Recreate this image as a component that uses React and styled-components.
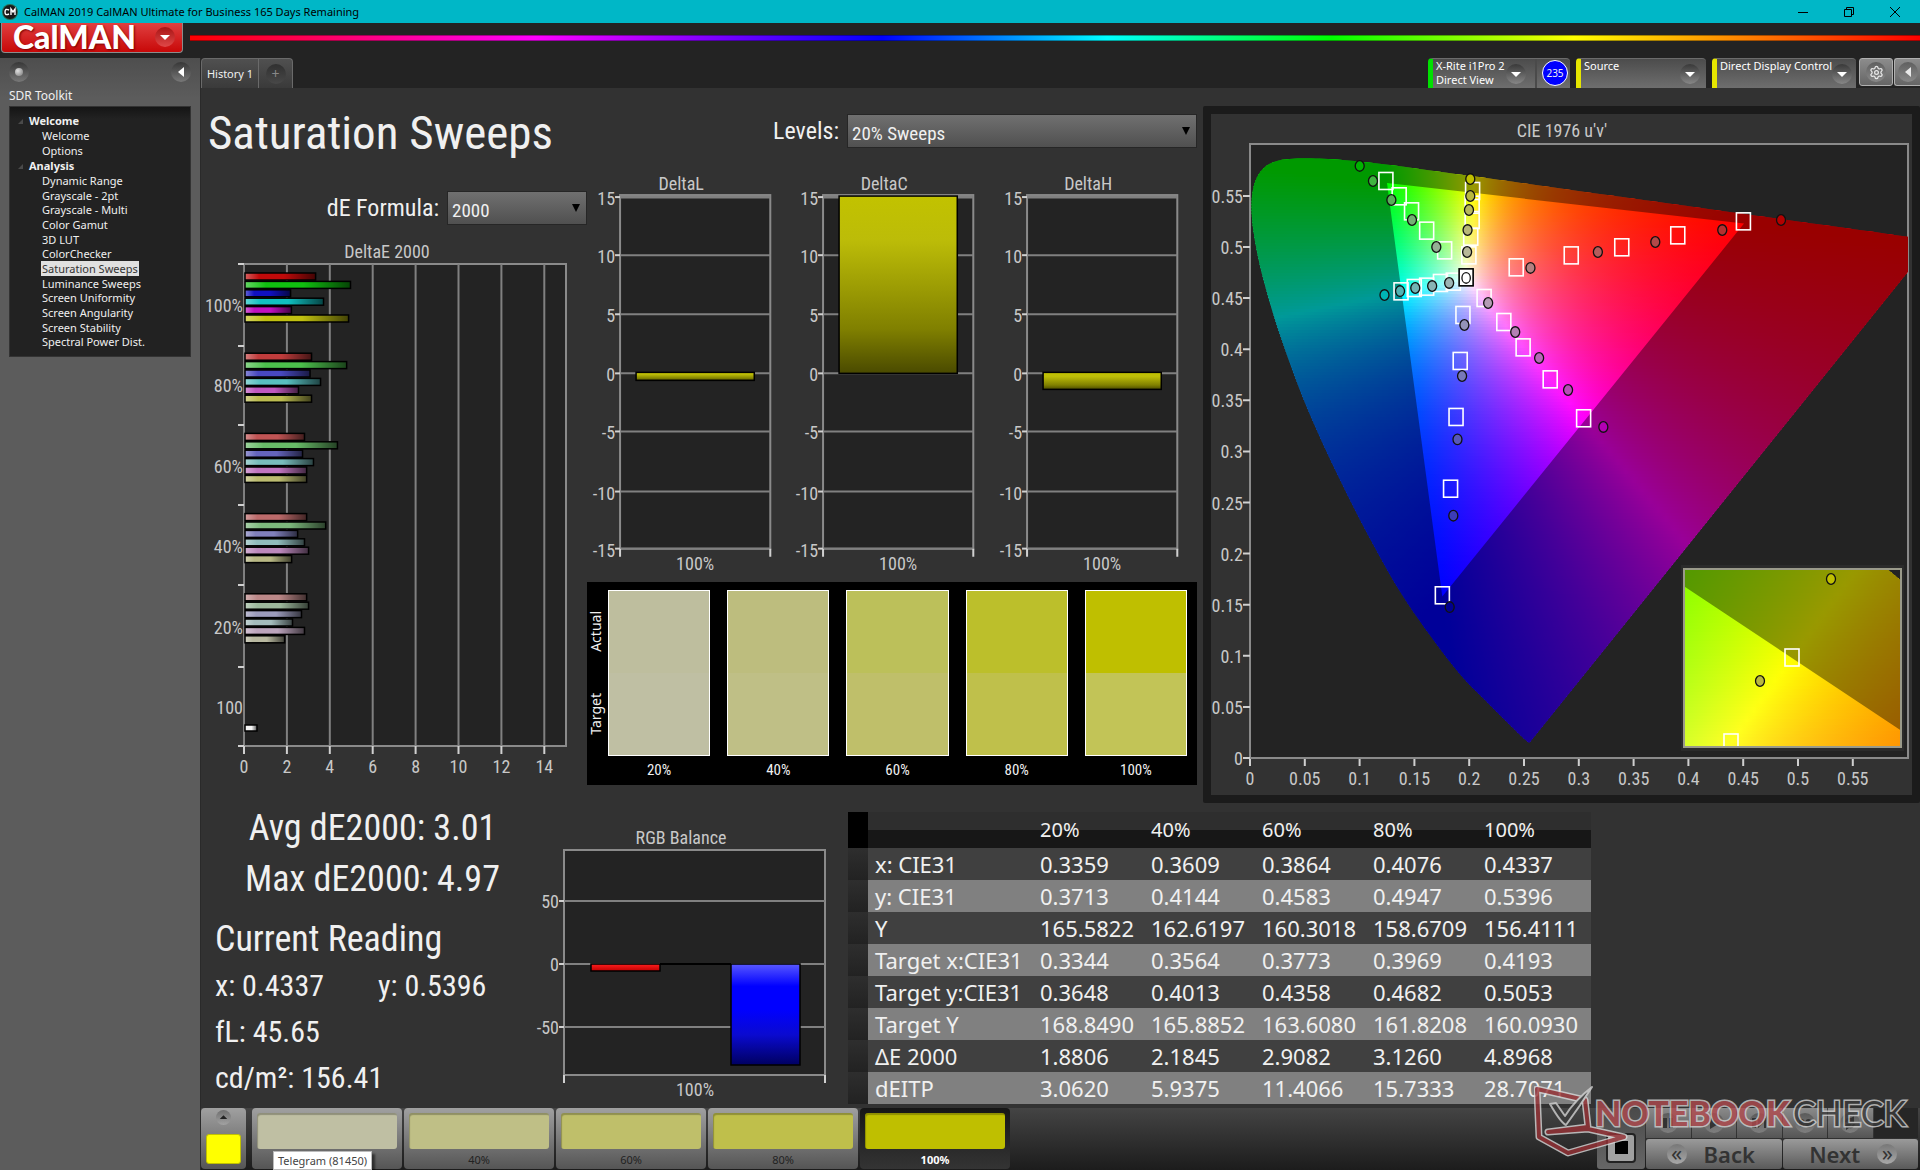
import React, { useState } from "react";
import styled, { createGlobalStyle } from "styled-components";
import { Settings } from "lucide-react";

const SANS = '"Noto Sans", "Open Sans", sans-serif';
const NARROW = `"Roboto Condensed", ${SANS}`;

const TREE = [
  { name: "Welcome", height: 29, items: ["Welcome", "Options"] },
  {
    name: "Analysis",
    height: 176,
    items: [
      "Dynamic Range",
      "Grayscale - 2pt",
      "Grayscale - Multi",
      "Color Gamut",
      "3D LUT",
      "ColorChecker",
      "Saturation Sweeps",
      "Luminance Sweeps",
      "Screen Uniformity",
      "Screen Angularity",
      "Screen Stability",
      "Spectral Power Dist.",
    ],
  },
];

const DELTA_E = [
  {
    label: "100%",
    values: [3.3, 4.93, 2.13, 3.67, 2.17, 4.84],
    colors: ["#c00a0a", "#10c010", "#1010c0", "#10c0c0", "#c010c0", "#c0c010"],
  },
  {
    label: "80%",
    values: [3.11, 4.75, 3.04, 3.53, 2.5, 3.11],
    colors: ["#c03c3c", "#4cc04c", "#4848c0", "#58c0c0", "#c058c0", "#bcbc50"],
  },
  {
    label: "60%",
    values: [2.78, 4.32, 2.69, 3.2, 2.88, 2.88],
    colors: ["#c05454", "#68bc68", "#6464bc", "#78bcbc", "#c074c0", "#bcbc70"],
  },
  {
    label: "40%",
    values: [2.88, 3.77, 2.46, 2.78, 2.97, 2.18],
    colors: ["#bc6a6a", "#7cb87c", "#8080bc", "#90bcbc", "#bc88bc", "#b8b884"],
  },
  {
    label: "20%",
    values: [2.88, 2.97, 2.64, 2.22, 2.78, 1.85],
    colors: ["#bc8888", "#9cb89c", "#9c9cbc", "#a4bcbc", "#bca4bc", "#b8b8a0"],
  },
];

const SWATCHES = [
  { label: "20%", actual: "#bebe9e", target: "#bfbfa3" },
  { label: "40%", actual: "#bdbd7e", target: "#bfbf86" },
  { label: "60%", actual: "#bcc05a", target: "#bfbf6a" },
  { label: "80%", actual: "#bcbf2b", target: "#bfc04b" },
  { label: "100%", actual: "#bfbf00", target: "#c2c457" },
];

const LEVELS = [
  { label: "20%", color: "#bfbfa3" },
  { label: "40%", color: "#bfbf86" },
  { label: "60%", color: "#bfbf6a" },
  { label: "80%", color: "#bfbf4b" },
  { label: "100%", color: "#bfbf00" },
];

const ROWS = [
  ["x: CIE31", "0.3359", "0.3609", "0.3864", "0.4076", "0.4337"],
  ["y: CIE31", "0.3713", "0.4144", "0.4583", "0.4947", "0.5396"],
  ["Y", "165.5822", "162.6197", "160.3018", "158.6709", "156.4111"],
  ["Target x:CIE31", "0.3344", "0.3564", "0.3773", "0.3969", "0.4193"],
  ["Target y:CIE31", "0.3648", "0.4013", "0.4358", "0.4682", "0.5053"],
  ["Target Y", "168.8490", "165.8852", "163.6080", "161.8208", "160.0930"],
  ["ΔE 2000", "1.8806", "2.1845", "2.9082", "3.1260", "4.8968"],
  ["dEITP", "3.0620", "5.9375", "11.4066", "15.7333", "28.7071"],
];

// CIE 1931 xy of the spectral locus, 400nm to 700nm
const LOCUS = [
  [0.1733, 0.0048], [0.1714, 0.0051], [0.1644, 0.0109], [0.1566, 0.0177],
  [0.144, 0.0297], [0.1241, 0.0578], [0.1096, 0.0868], [0.0913, 0.1327],
  [0.0687, 0.2007], [0.0454, 0.295], [0.0235, 0.4127], [0.0082, 0.5384],
  [0.0039, 0.6548], [0.0139, 0.7502], [0.0389, 0.812], [0.0743, 0.8338],
  [0.1142, 0.8262], [0.1547, 0.8059], [0.2296, 0.7543], [0.3016, 0.6923],
  [0.3731, 0.6245], [0.4441, 0.5547], [0.5125, 0.4866], [0.5752, 0.4242],
  [0.627, 0.3725], [0.6915, 0.3083], [0.7347, 0.2653],
];
const GAMUT = [[0.64, 0.33], [0.3, 0.6], [0.15, 0.06]];

const TARGETS = [
  [0.124, 0.5646], [0.1361, 0.5496], [0.1474, 0.5349], [0.1612, 0.516], [0.1776, 0.4967],
  [0.2031, 0.5548], [0.2027, 0.5414], [0.2027, 0.5264], [0.2014, 0.5101], [0.1997, 0.4918],
  [0.4502, 0.5251], [0.3903, 0.5114], [0.3392, 0.4997], [0.2931, 0.4918], [0.2429, 0.4801],
  [0.1378, 0.4566], [0.1499, 0.4599], [0.1612, 0.4612], [0.1738, 0.4648], [0.1855, 0.4661],
  [0.1943, 0.4335], [0.1918, 0.3885], [0.188, 0.3337], [0.183, 0.2635], [0.1755, 0.1592],
  [0.2136, 0.4501], [0.2316, 0.4266], [0.2492, 0.4018], [0.2739, 0.3705], [0.3044, 0.3324],
];

const READINGS = [
  [0.1001, 0.5793, "#00b400"], [0.1122, 0.5646, "#40b440"], [0.129, 0.546, "#58b058"],
  [0.1478, 0.5264, "#74b074"], [0.17, 0.5, "#94b094"],
  [0.201, 0.5665, "#c0c000"], [0.201, 0.5499, "#b8b840"], [0.1998, 0.5362, "#b8b85c"],
  [0.1985, 0.5166, "#b8b878"], [0.1981, 0.4951, "#b8b898"],
  [0.4845, 0.5264, "#b40000"], [0.4309, 0.5166, "#b43030"], [0.3698, 0.5049, "#b44848"],
  [0.3174, 0.4951, "#b45c5c"], [0.2559, 0.4795, "#b48080"],
  [0.1227, 0.453, "#00b4b4"], [0.1369, 0.4569, "#50b4b4"], [0.1508, 0.4599, "#70b4b4"],
  [0.1662, 0.4618, "#88b4b4"], [0.1817, 0.4648, "#9cb4b4"],
  [0.1956, 0.4237, "#9494b8"], [0.1935, 0.3738, "#7878b8"], [0.1893, 0.3118, "#5858b8"],
  [0.1855, 0.2371, "#3c3cb8"], [0.1822, 0.1477, "#000090"],
  [0.2173, 0.4452, "#b49cb4"], [0.242, 0.4168, "#b480b4"], [0.2638, 0.3914, "#b868b8"],
  [0.2902, 0.3601, "#b84cb8"], [0.3224, 0.3239, "#b400b4"],
];

const xyToUv = ([x, y]) => {
  const d = -2 * x + 12 * y + 3;
  return [(4 * x) / d, (9 * y) / d];
};

const uvToXy = (u, v) => {
  const d = 6 * u - 16 * v + 12;
  return [(9 * u) / d, (4 * v) / d];
};

// brightest displayable colour of a chromaticity, linear light
const colorOf = (x, y) => {
  const yy = Math.max(y, 0.001);
  const X = x / yy;
  const Z = (1 - x - yy) / yy;
  const rgb = [
    3.2406 * X - 1.5372 - 0.4986 * Z,
    -0.9689 * X + 1.8758 + 0.0415 * Z,
    0.0557 * X - 0.204 + 1.057 * Z,
  ].map((c) => Math.max(c, 0));
  const top = Math.max(...rgb, 0.0001);
  return `rgb(${rgb.map((c) => Math.round((c / top) * 255)).join(",")})`;
};

const toPath = (points) => "M" + points.map((p) => p.map((n) => n.toFixed(1)).join(" ")).join("L") + "Z";

// runs a Catmull-Rom curve through the points so the locus stays round
const toCurve = (pts) => {
  let d = `M${pts[0][0].toFixed(1)} ${pts[0][1].toFixed(1)}`;
  for (let i = 0; i < pts.length - 1; i++) {
    const p0 = pts[i - 1] || pts[i];
    const p1 = pts[i];
    const p2 = pts[i + 1];
    const p3 = pts[i + 2] || p2;
    const c = [
      p1[0] + (p2[0] - p0[0]) / 6, p1[1] + (p2[1] - p0[1]) / 6,
      p2[0] - (p3[0] - p1[0]) / 6, p2[1] - (p3[1] - p1[1]) / 6,
      p2[0], p2[1],
    ];
    d += "C" + c.map((n) => n.toFixed(1)).join(" ");
  }
  return d + "Z";
};

function Chroma({ id, box, stepX, stepY, inverse }) {
  const strips = [];
  for (let y = box.y; y < box.y + box.h; y += stepY) {
    const stops = [];
    for (let x = box.x; x <= box.x + box.w + stepX; x += stepX) {
      const [cx, cy] = inverse(x, y + stepY / 2);
      stops.push(
        <stop key={x} offset={(x - box.x) / box.w} stopColor={colorOf(cx, cy)} />
      );
    }
    const gid = `${id}-${y}`;
    strips.push(
      <g key={gid}>
        <linearGradient id={gid} gradientUnits="userSpaceOnUse" x1={box.x} x2={box.x + box.w} y1="0" y2="0">
          {stops}
        </linearGradient>
        <rect x={box.x} y={y} width={box.w} height={stepY + 1} fill={`url(#${gid})`} />
      </g>
    );
  }
  return <>{strips}</>;
}

function CieChart() {
  const px = (u) => 39 + u * 1096;
  const py = (v) => 644 - v * 1022;
  const uvPoint = (xy) => {
    const [u, v] = xyToUv(xy);
    return [px(u), py(v)];
  };
  const inverse = (x, y) => uvToXy((x - 39) / 1096, (644 - y) / 1022);
  const ix = (x) => 581 + (x - 0.4193) * 2715;
  const iy = (y) => 544 - (y - 0.5053) * 2273;
  const insetInverse = (x, y) => [0.4193 + (x - 581) / 2715, 0.5053 - (y - 544) / 2273];
  const ticks = Array.from({ length: 12 }, (_, i) => i / 20);

  return (
    <Drawing viewBox="0 0 701 681" role="img" aria-label="CIE 1976 chromaticity">
      <defs>
        <clipPath id="plot"><rect x="40" y="31" width="657" height="612" /></clipPath>
        <clipPath id="locus"><path d={toCurve(LOCUS.map(uvPoint))} /></clipPath>
        <clipPath id="inset"><rect x="473" y="455" width="217" height="178" /></clipPath>
        <clipPath id="insetLocus"><path d={toPath(LOCUS.map(([x, y]) => [ix(x), iy(y)]))} /></clipPath>
      </defs>
      <ChartText x="351" y="23" $anchor="middle">CIE 1976 u'v'</ChartText>
      <rect x="39" y="30" width="658" height="614" fill="#232323" stroke="#8a8a8a" strokeWidth="2" />
      <g clipPath="url(#plot)">
        <g clipPath="url(#locus)">
          <Chroma id="uv" box={{ x: 39, y: 36, w: 660, h: 600 }} stepX={8} stepY={3} inverse={inverse} />
          <path
            d={"M0 0H701V681H0Z" + toPath(GAMUT.map(uvPoint))}
            fillRule="evenodd"
            fill="rgba(0,0,0,0.4)"
          />
        </g>
        {TARGETS.map(([u, v]) => (
          <rect
            key={`${u}-${v}`} x={px(u) - 7} y={py(v) - 8.5} width="14" height="17"
            fill="none" stroke="#fff" strokeWidth="1.6"
          />
        ))}
        {READINGS.map(([u, v, color]) => (
          <ellipse
            key={`${u}-${v}`} cx={px(u)} cy={py(v)} rx="4.5" ry="5.3"
            fill={color} stroke="#111" strokeWidth="1.3"
          />
        ))}
        <rect x={px(0.1972) - 7} y={py(0.4703) - 8.5} width="14" height="17" fill="#fff" stroke="#000" strokeWidth="1.6" />
        <ellipse cx={px(0.1972)} cy={py(0.4697)} rx="4.2" ry="5.3" fill="#fff" stroke="#111" strokeWidth="1.3" />
      </g>
      <rect x="470" y="451" width="223" height="186" fill="#2b2b2b" />
      <rect x="473" y="455" width="217" height="178" fill="#232323" />
      <g clipPath="url(#inset)">
        <g clipPath="url(#insetLocus)">
          <Chroma id="xy" box={{ x: 473, y: 455, w: 217, h: 178 }} stepX={7} stepY={3} inverse={insetInverse} />
          <path
            d={"M400 400H701V681H400Z" + toPath(GAMUT.map(([x, y]) => [ix(x), iy(y)]))}
            fillRule="evenodd"
            fill="rgba(0,0,0,0.4)"
          />
        </g>
        <rect x="574" y="535" width="14" height="17" fill="none" stroke="#fff" strokeWidth="1.6" />
        <rect x="513" y="620" width="14" height="17" fill="none" stroke="#fff" strokeWidth="1.6" />
        <ellipse cx="620" cy="465" rx="4.5" ry="5.3" fill="#c0c000" stroke="#111" strokeWidth="1.3" />
        <ellipse cx="549" cy="567" rx="4.5" ry="5.3" fill="#b8b840" stroke="#111" strokeWidth="1.3" />
      </g>
      <rect x="473" y="455" width="217" height="178" fill="none" stroke="#9a9a8a" strokeWidth="2" />
      {ticks.map((t) => (
        <g key={t}>
          <path d={`M${px(t)} 645V652M32 ${py(t)}H39`} stroke="#d0d0d0" strokeWidth="2" />
          <ChartText x={px(t)} y="671" $anchor="middle">{t}</ChartText>
          <ChartText x="32" y={py(t) + 7} $anchor="end">{t}</ChartText>
        </g>
      ))}
    </Drawing>
  );
}

function DeltaEChart() {
  const px = (v) => 44 + v * 21.45;
  const grid = [0, 2, 4, 6, 8, 10, 12, 14];
  return (
    <Drawing viewBox="1 0 386 578" role="img" aria-label="DeltaE 2000">
      <defs>
        <linearGradient id="barShade">
          <stop offset="0" stopColor="#fff" stopOpacity="0.35" />
          <stop offset="0.2" stopColor="#fff" stopOpacity="0" />
          <stop offset="0.55" stopColor="#000" stopOpacity="0" />
          <stop offset="1" stopColor="#000" stopOpacity="0.65" />
        </linearGradient>
      </defs>
      <ChartText x="187" y="33" $anchor="middle">DeltaE 2000</ChartText>
      <rect x="44" y="39" width="322" height="482" fill="#232323" stroke="#8a8a8a" strokeWidth="2" />
      {grid.map((v) => (
        <g key={v}>
          <path d={`M${px(v)} 39V521`} stroke="#808080" strokeWidth="2" />
          <path d={`M${px(v)} 521V529`} stroke="#d0d0d0" strokeWidth="2" />
          <ChartText x={px(v)} y="548" $anchor="middle">{v}</ChartText>
        </g>
      ))}
      {[39, 121, 200, 280, 360, 442, 521].map((y) => (
        <path key={y} d={`M38 ${y}H44`} stroke="#d0d0d0" strokeWidth="2" />
      ))}
      {DELTA_E.map((group, i) => (
        <g key={group.label}>
          <ChartText x="43" y={87 + i * 80.4} $anchor="end">{group.label}</ChartText>
          {group.values.map((v, j) => {
            const bar = {
              x: 45, y: 48 + i * 80.2 + j * 8.4, width: v * 21.4, height: 7,
            };
            return (
              <g key={j}>
                <rect {...bar} fill={group.colors[j]} />
                <rect {...bar} fill="url(#barShade)" stroke="#000" strokeWidth="1.5" />
              </g>
            );
          })}
        </g>
      ))}
      <ChartText x="43" y="489" $anchor="end">100</ChartText>
      <rect x="45" y="500" width="12" height="6" fill="#f4f4f4" />
      <rect x="45" y="500" width="12" height="6" fill="url(#barShade)" stroke="#000" strokeWidth="1.5" />
    </Drawing>
  );
}

function DeltaChart({ name, top, height }) {
  return (
    <Drawing viewBox="0 1 203 433" role="img" aria-label={name}>
      <defs>
        <linearGradient id="yellowBar" x2="0" y2="1">
          <stop offset="0" stopColor="#c2c200" />
          <stop offset="0.25" stopColor="#bcbc08" />
          <stop offset="0.75" stopColor="#808000" />
          <stop offset="1" stopColor="#4a4a00" />
        </linearGradient>
      </defs>
      <ChartText x="94" y="43" $anchor="middle">{name}</ChartText>
      <rect x="33" y="48" width="150" height="353" fill="#232323" stroke="#8a8a8a" strokeWidth="2" />
      {[15, 10, 5, 0, -5, -10, -15].map((v, i) => {
        const y = [50, 108, 167, 226, 284, 344, 401][i];
        return (
          <g key={v}>
            <path d={`M33 ${y}H183`} stroke="#808080" strokeWidth={v === 15 ? 3 : 2} />
            <path d={`M28 ${y}H33`} stroke="#d0d0d0" strokeWidth="2" />
            <ChartText x="28" y={y + 8} $anchor="end">{v}</ChartText>
          </g>
        );
      })}
      <path d="M33 401V409M183 401V409" stroke="#d0d0d0" strokeWidth="2" />
      <rect x="49" y={top} width="118" height={height} fill="url(#yellowBar)" stroke="#000" strokeWidth="1.5" />
      <ChartText x="108" y="422" $anchor="middle">100%</ChartText>
    </Drawing>
  );
}

function RgbChart() {
  return (
    <Drawing viewBox="0 0 328 305" role="img" aria-label="RGB Balance">
      <defs>
        <linearGradient id="redBar" x2="0" y2="1">
          <stop offset="0" stopColor="#ff2020" />
          <stop offset="1" stopColor="#c00000" />
        </linearGradient>
        <linearGradient id="blueBar" x2="0" y2="1">
          <stop offset="0" stopColor="#5858ff" />
          <stop offset="0.22" stopColor="#0000ff" />
          <stop offset="0.45" stopColor="#0000ff" />
          <stop offset="0.7" stopColor="#0a0ad0" />
          <stop offset="1" stopColor="#000060" />
        </linearGradient>
      </defs>
      <ChartText x="161" y="41" $anchor="middle">RGB Balance</ChartText>
      <rect x="44" y="47" width="261" height="225" fill="#232323" stroke="#8a8a8a" strokeWidth="2" />
      {[[50, 98], [0, 161], [-50, 224]].map(([v, y]) => (
        <g key={v}>
          <path d={`M44 ${y}H305`} stroke="#808080" strokeWidth="2" />
          <path d={`M39 ${y}H44`} stroke="#d0d0d0" strokeWidth="2" />
          <ChartText x="39" y={y + 7} $anchor="end">{v}</ChartText>
        </g>
      ))}
      <path d="M44 272V280M305 272V280" stroke="#d0d0d0" strokeWidth="2" />
      <path d="M140 161H211" stroke="#000" strokeWidth="2" />
      <rect x="71" y="161" width="69" height="7" fill="url(#redBar)" stroke="#000" strokeWidth="1.5" />
      <rect x="211" y="161" width="69" height="101" fill="url(#blueBar)" stroke="#000" strokeWidth="1.5" />
      <ChartText x="175" y="293" $anchor="middle">100%</ChartText>
    </Drawing>
  );
}

function Glyph({ d, size = 20 }) {
  return (
    <Round $size={size}>
      <svg width={size} height={size} viewBox="0 0 20 20" aria-hidden="true">
        <path d={d} fill="currentColor" />
      </svg>
    </Round>
  );
}

const DOWN = "M5 8H15L10 13Z";
const LEFT = "M13 5V15L7 10Z";
const UP = "M5 12H15L10 7Z";
const CONTROLS = [
  { name: "Pause", d: "M5 5H9V15H5ZM11 5H15V15H11Z" },
  { name: "Play", d: "M6 4L16 10L6 16Z" },
  { name: "Step", d: "M3 5H7V15H3ZM9 5L14 10L9 15ZM15 5H17V15H15Z" },
  {
    name: "Continuous",
    d: "M4 10Q4 6 7 6Q9 6 10 9Q11 6 13 6Q17 6 17 10Q17 14 13 14Q11 14 10 11Q9 14 7 14Q4 14 4 10Z",
  },
  { name: "Repeat", d: "M5 9Q6 4 11 5L14 3V9H8L10 7Q8 7 7 9ZM15 11Q14 16 9 15L6 17V11H12L10 13Q12 13 13 11Z" },
];

function Device({ color, lines, width, label, children }) {
  return (
    <DeviceBox $color={color} $width={width}>
      <DeviceButton type="button" aria-label={label}>
        <DeviceName>
          {lines.map((line) => (
            <span key={line}>{line}</span>
          ))}
        </DeviceName>
        <Glyph d={DOWN} />
      </DeviceButton>
      {children}
    </DeviceBox>
  );
}

function Picker({ id, label, value, width, onChange, options }) {
  return (
    <Field>
      <label htmlFor={id}>{label}</label>
      <SelectBox $width={width}>
        <select id={id} value={value} onChange={(e) => onChange(e.target.value)}>
          {options.map((o) => (
            <option key={o}>{o}</option>
          ))}
        </select>
        <svg width="12" height="10" viewBox="0 0 12 10" aria-hidden="true">
          <path d="M2 1H10L6 9Z" fill="#000" />
        </svg>
      </SelectBox>
    </Field>
  );
}

const BADGE = "M3 3L51 14L54 41L14 46L54 43L90 51L34 67L5 51Z";

function Watermark() {
  return (
    <Mark viewBox="0 0 386 84" aria-label="Notebookcheck">
      <g strokeLinejoin="round" strokeLinecap="round" fill="none">
        <path d={BADGE} stroke="#d8d8d8" strokeWidth="7" />
        <path d={BADGE} stroke="#983236" strokeWidth="4" />
        <path
          d="M16 18L22 17L31 30Q41 14 58 1Q46 20 32 39Q27 37 16 18Z"
          fill="#3c3c3c" stroke="#d0d0d0" strokeWidth="2"
        />
      </g>
      <MarkText x="61" y="40" $color="#b04a4e" $weight="900">NOTEBOOK</MarkText>
      <MarkText x="259" y="40" $color="#3a3a3a" $weight="400">CHECK</MarkText>
    </Mark>
  );
}

export default function App() {
  const [page, setPage] = useState("Saturation Sweeps");
  const [formula, setFormula] = useState("2000");
  const [levels, setLevels] = useState("20% Sweeps");
  const [level, setLevel] = useState("100%");

  return (
    <Window>
      <GlobalStyle />
      <TitleBar>
        <svg width="16" height="16" viewBox="0 0 16 16" aria-hidden="true">
          <circle cx="8" cy="8" r="8" fill="#2a6a50" />
          <circle cx="8" cy="8" r="7" fill="#181818" />
          <path d="M7 6Q3 4 3 8Q3 12 7 10M9 11V5L11 8L13 5V11" fill="none" stroke="#fff" strokeWidth="1.4" />
        </svg>
        <WindowTitle>CalMAN 2019 CalMAN Ultimate for Business 165 Days Remaining</WindowTitle>
        <WindowButton type="button" aria-label="Minimize">
          <svg width="12" height="12" viewBox="0 0 12 12"><path d="M1 6.5H11" stroke="#000" /></svg>
        </WindowButton>
        <WindowButton type="button" aria-label="Restore">
          <svg width="12" height="12" viewBox="0 0 12 12">
            <path d="M1.500 3.500H8.500V10.500H1.500ZM3.500 3V1.500H10.500V8.500H9" fill="none" stroke="#000" />
          </svg>
        </WindowButton>
        <WindowButton type="button" aria-label="Close">
          <svg width="12" height="12" viewBox="0 0 12 12"><path d="M1 1L11 11M11 1L1 11" stroke="#000" /></svg>
        </WindowButton>
      </TitleBar>

      <BrandBar>
        <Brand type="button">
          CalMAN
          <BrandDot>
            <svg width="20" height="20" viewBox="0 0 20 20" aria-hidden="true"><path d="M5 8H15L10 13Z" fill="#fff" /></svg>
          </BrandDot>
        </Brand>
        <Spectrum />
      </BrandBar>

      <Body>
        <Sidebar>
          <SidebarTop>
            <Round $size={20}><Led /></Round>
            <PlainButton type="button" aria-label="Collapse"><Glyph d={LEFT} /></PlainButton>
          </SidebarTop>
          <SidebarTitle>SDR Toolkit</SidebarTitle>
          <Tree>
            {TREE.map((group) => (
              <section key={group.name}>
                <TreeHead>{group.name}</TreeHead>
                <TreeList $height={group.height}>
                  {group.items.map((item) => (
                    <li key={item}>
                      <TreeLink href="#" $active={item === page} onClick={() => setPage(item)}>
                        {item}
                      </TreeLink>
                    </li>
                  ))}
                </TreeList>
              </section>
            ))}
          </Tree>
        </Sidebar>

        <Main>
          <TabBar>
            <Tab type="button">History 1</Tab>
            <AddTab type="button" aria-label="Add history"><span>+</span></AddTab>
            <Devices>
              <Device color="#00e000" lines={["X-Rite i1Pro 2", "Direct View"]} width={142} label="Meter">
                <LevelCell><Level235>235</Level235></LevelCell>
              </Device>
              <Device color="#e6e600" lines={["Source"]} width={130} label="Source" />
              <Device color="#e6e600" lines={["Direct Display Control"]} width={144} label="Display" />
              <ToolPair>
                <ToolButton type="button" aria-label="Settings">
                  <Round $size={20}><Settings size={15} /></Round>
                </ToolButton>
                <ToolButton type="button" aria-label="Hide"><Glyph d={LEFT} /></ToolButton>
              </ToolPair>
            </Devices>
          </TabBar>

          <Content>
            <Upper>
              <div>
                <PageTitle>Saturation Sweeps</PageTitle>
                <Picker
                  id="formula" label="dE Formula:" width={140}
                  value={formula} onChange={setFormula} options={["2000", "1994", "1976"]}
                />
                <DeltaEChart />
              </div>
              <Middle>
                <Picker
                  id="levels" label="Levels:" width={350}
                  value={levels} onChange={setLevels} options={["20% Sweeps", "25% Sweeps"]}
                />
                <Deltas>
                  <DeltaChart name="DeltaL" top={225} height={8} />
                  <DeltaChart name="DeltaC" top={49} height={177} />
                  <DeltaChart name="DeltaH" top={225} height={17} />
                </Deltas>
                <SwatchPanel>
                  <SwatchSides>
                    <span>Actual</span>
                    <span>Target</span>
                  </SwatchSides>
                  {SWATCHES.map((s) => (
                    <Swatch key={s.label} $actual={s.actual} $target={s.target}>
                      <div />
                      <figcaption>{s.label}</figcaption>
                    </Swatch>
                  ))}
                </SwatchPanel>
              </Middle>
              <CiePanel>
                <CieChart />
              </CiePanel>
            </Upper>

            <Lower>
              <Stats>
                <Summary>Avg dE2000: 3.01</Summary>
                <Summary>Max dE2000: 4.97</Summary>
                <ReadingTitle>Current Reading</ReadingTitle>
                <Reading><span>x: 0.4337</span><span>y: 0.5396</span></Reading>
                <Reading><span>fL: 45.65</span></Reading>
                <Reading><span>cd/m²: 156.41</span></Reading>
              </Stats>
              <RgbBox><RgbChart /></RgbBox>
              <DataTable>
                <thead>
                  <tr>
                    <td />
                    <th />
                    {LEVELS.map((l) => (
                      <th key={l.label} scope="col">{l.label}</th>
                    ))}
                  </tr>
                </thead>
                <tbody>
                  {ROWS.map(([name, ...cells]) => (
                    <tr key={name}>
                      <td />
                      <th scope="row">{name}</th>
                      {cells.map((c) => (
                        <td key={c}>{c}</td>
                      ))}
                    </tr>
                  ))}
                </tbody>
              </DataTable>
            </Lower>
          </Content>

          <Footer>
            <MeterButton type="button" aria-label="Pattern">
              <Glyph d={UP} size={15} />
              <i />
            </MeterButton>
            {LEVELS.map((l, i) => (
              <LevelButton
                key={l.label} type="button" aria-label={l.label} $color={l.color}
                $active={l.label === level} onClick={() => setLevel(l.label)}
              >
                <i />
                {i === 0 ? <Tooltip role="tooltip">Telegram (81450)</Tooltip> : <span>{l.label}</span>}
              </LevelButton>
            ))}
            <Controls>
              <StopButton type="button" aria-label="Stop"><b /></StopButton>
              <ControlGrid>
                {CONTROLS.map((c) => (
                  <ControlButton key={c.name} type="button" aria-label={c.name}>
                    <Glyph d={c.d} />
                  </ControlButton>
                ))}
                <ControlOff />
                <NavButton type="button"><Arrows>«</Arrows>Back</NavButton>
                <NavButton type="button">Next<Arrows>»</Arrows></NavButton>
              </ControlGrid>
            </Controls>
          </Footer>
        </Main>
      </Body>
      <Watermark />
    </Window>
  );
}

const GlobalStyle = createGlobalStyle`
  * {
    box-sizing: border-box;
  }
  body {
    margin: 0;
    background: #232323;
    color: #f0f0f0;
    font-family: ${SANS};
  }
  button, select {
    font-family: inherit;
    color: inherit;
  }
  button {
    border: 0;
    padding: 0;
    cursor: pointer;
  }
`;

const Window = styled.div`
  position: relative;
  display: flex;
  flex-direction: column;
  min-height: 100vh;
`;

const TitleBar = styled.header`
  display: flex;
  align-items: center;
  height: 23px;
  padding-left: 2px;
  background: #00b7c7;
  color: #000;
`;

const WindowTitle = styled.span`
  flex: 1;
  margin-left: 6px;
  font-size: 11px;
`;

const WindowButton = styled.button`
  display: grid;
  place-items: center;
  width: 46px;
  height: 21px;
  background: none;

  &:last-child {
    margin-right: 2px;
  }
`;

const BrandBar = styled.div`
  display: flex;
  align-items: flex-start;
  height: 35px;
  padding-left: 1px;
  background: #232323;
`;

const Brand = styled.button`
  display: flex;
  align-items: center;
  justify-content: space-between;
  width: 182px;
  height: 30px;
  padding: 0 7px 2px 11px;
  border: 1px solid #8c8c8c;
  border-top: 0;
  border-radius: 0 0 4px 4px;
  background: linear-gradient(#e04040, #c80808);
  color: #fff;
  font: 900 32px/26px Lato, sans-serif;
  text-shadow: 1px 1px 2px #700;
`;

const BrandDot = styled.span`
  display: grid;
  border-radius: 50%;
  background: linear-gradient(#a81414, #e04848);
`;

const Spectrum = styled.div`
  flex: 1;
  height: 6px;
  margin: 12px 0 0 7px;
  border: solid rgba(0, 0, 0, 0.35);
  border-width: 1px 0;
  background: linear-gradient(90deg, #f00, #f0f 20%, #00f 40%, #0ff 53%, #0f0 66%, #ff0 80%, #f00) border-box;
`;

const Body = styled.div`
  display: flex;
  flex: 1;
`;

const Sidebar = styled.aside`
  width: 201px;
  flex: none;
  padding: 4px 9px 0;
  border-right: 1px solid #2a2a2a;
  background: linear-gradient(#4e4e4e, #5c5c5c 40px);
`;

const SidebarTop = styled.div`
  display: flex;
  justify-content: space-between;
`;

const Round = styled.span`
  display: grid;
  place-items: center;
  width: ${(p) => p.$size}px;
  height: ${(p) => p.$size}px;
  flex: none;
  border-radius: 50%;
  background: linear-gradient(rgba(0, 0, 0, 0.3), rgba(255, 255, 255, 0.2));
`;

const Led = styled.i`
  width: 8px;
  height: 8px;
  border-radius: 50%;
  background: radial-gradient(circle at 35% 35%, #e0e0e0, #777);
`;

const PlainButton = styled.button`
  background: none;
  color: #fff;
`;

const SidebarTitle = styled.h2`
  margin: 4px 0 0;
  font-size: 12px;
  font-weight: 400;
  line-height: 20px;
`;

const Tree = styled.nav`
  padding: 6px 0 6px 19px;
  border: 1px solid #333;
  background: linear-gradient(#151515, #222 12px);
  font-size: 11px;
  line-height: 14px;
`;

const TreeHead = styled.h3`
  position: relative;
  margin: 0;
  font-size: 11px;
  line-height: 16px;

  &::before {
    content: "";
    position: absolute;
    left: -11px;
    top: 6px;
    border: solid transparent;
    border-width: 5px 0 0 5px;
    border-bottom: 5px solid #4a4a4a;
    border-top: 0;
  }
`;

const TreeList = styled.ul`
  display: grid;
  grid-auto-rows: 1fr;
  height: ${(p) => p.$height}px;
  margin: 0;
  padding: 0 0 0 12px;
  list-style: none;
`;

const TreeLink = styled.a`
  padding: 0 1px;
  color: ${(p) => (p.$active ? "#333" : "#f0f0f0")};
  background: ${(p) => (p.$active ? "#e0e0e0" : "none")};
  text-decoration: none;
  white-space: nowrap;
`;

const Main = styled.main`
  display: flex;
  flex: 1;
  flex-direction: column;
  min-width: 0;
`;

const TabBar = styled.div`
  display: flex;
  height: 30px;
  background: #232323;
`;

const Tab = styled.button`
  width: 58px;
  border: 1px solid #6a6a6a;
  border-bottom: 0;
  border-radius: 4px 0 0 0;
  background: linear-gradient(#505050, #3a3a3a);
  font-size: 11px;
`;

const AddTab = styled(Tab)`
  width: 34px;
  border-left: 0;
  border-radius: 0 4px 0 0;
  color: #888;

  span {
    display: block;
    width: 20px;
    margin: auto;
    border-radius: 50%;
    background: linear-gradient(#303030, #484848);
    font-size: 14px;
    line-height: 20px;
  }
`;

const Devices = styled.div`
  display: flex;
  gap: 6px;
  margin-left: auto;
`;

const DeviceBox = styled.div`
  display: flex;
  width: ${(p) => p.$width}px;
  border-top: 1px solid #6c6c6c;
  border-left: 5px solid ${(p) => p.$color};
  border-radius: 4px 4px 0 0;
  background: linear-gradient(#4c4c4c, #6e6e6e);
`;

const DeviceButton = styled.button`
  display: flex;
  flex: 1;
  align-items: center;
  justify-content: space-between;
  padding: 0 6px 0 3px;
  background: none;
  color: #fff;
  white-space: nowrap;
`;

const DeviceName = styled.span`
  display: flex;
  flex-direction: column;
  align-self: flex-start;
  font-size: 11px;
  line-height: 14px;
  text-align: left;
`;

const LevelCell = styled.span`
  display: flex;
  justify-content: flex-end;
  width: 35px;
  padding: 1px 2px 0 0;
  margin-left: 3px;
  border-left: 2px solid #4a4a4a;
`;

const Level235 = styled.span`
  width: 26px;
  height: 26px;
  border: 1px solid #fff;
  border-radius: 50%;
  background: #00f;
  font-size: 10px;
  line-height: 24px;
  text-align: center;
`;

const ToolPair = styled.div`
  display: flex;
  gap: 1px;
  margin-left: -3px;
`;

const ToolButton = styled.button`
  display: grid;
  place-items: center;
  width: 34px;
  height: 28px;
  border: 1px solid #b0b0b0;
  border-radius: 3px;
  background: linear-gradient(#8c8c8c, #666);
  color: #e8e8e8;

  & + & {
    width: 26px;
    border-right: 0;
    border-radius: 3px 0 0 3px;
  }
`;

const Content = styled.div`
  display: flex;
  flex: 1;
  flex-direction: column;
  background: #323232;
`;

const Upper = styled.div`
  display: grid;
  grid-template-columns: minmax(0, 386fr) minmax(0, 616fr) minmax(0, 717fr);
  align-items: start;
`;

const PageTitle = styled.h1`
  margin: 13px 0 26px 7px;
  font-family: ${NARROW};
  font-size: 47px;
  font-weight: 400;
  line-height: 64px;
`;

const Field = styled.div`
  display: flex;
  align-items: center;
  justify-content: flex-end;
  gap: 8px;
  font-family: ${NARROW};
  font-size: 24px;
`;

const SelectBox = styled.div`
  position: relative;
  width: ${(p) => p.$width}px;

  select {
    display: block;
    width: 100%;
    height: 34px;
    padding: 5px 24px 0 4px;
    border: 1px solid #262626;
    border-radius: 0;
    appearance: none;
    background: linear-gradient(#707070, #505050);
    font-size: 19px;
  }

  svg {
    position: absolute;
    right: 5px;
    top: 12px;
    pointer-events: none;
  }
`;

const Drawing = styled.svg`
  display: block;
  width: 100%;
  height: auto;
`;

const ChartText = styled.text`
  fill: #c8c8c8;
  font-family: ${NARROW};
  font-size: 18px;
  text-anchor: ${(p) => p.$anchor};
`;

const Middle = styled.div`
  padding: 26px 6px 0 0;
`;

const Deltas = styled.div`
  display: grid;
  grid-template-columns: repeat(3, 1fr);
`;

const SwatchPanel = styled.div`
  display: flex;
  gap: 17px;
  height: 203px;
  padding: 8px 10px 0 0;
  background: #000;
`;

const SwatchSides = styled.div`
  display: flex;
  flex-direction: row-reverse;
  justify-content: space-around;
  width: 17px;
  height: 166px;
  margin-right: -13px;
  writing-mode: sideways-lr;
  font-size: 14px;
  line-height: 17px;
`;

const Swatch = styled.figure`
  flex: 1;
  margin: 0;
  text-align: center;

  div {
    height: 166px;
    border: 1px solid #fff;
    background: linear-gradient(${(p) => p.$actual} 50%, ${(p) => p.$target} 50%);
  }

  figcaption {
    font-family: ${NARROW};
    font-size: 15px;
    line-height: 28px;
  }
`;

const CiePanel = styled.div`
  margin-top: 18px;
  border: 8px solid #1b1b1b;
  border-radius: 2px;
`;

const Lower = styled.div`
  display: flex;
`;

const Stats = styled.div`
  width: 319px;
  padding-left: 14px;
  font-family: ${NARROW};
`;

const Summary = styled.p`
  margin: 0;
  padding-left: 10px;
  font-size: 36px;
  line-height: 51px;
  text-align: center;
`;

const ReadingTitle = styled.h2`
  margin: 10px 0 0;
  font-size: 36px;
  font-weight: 400;
  line-height: 48px;
`;

const Reading = styled.p`
  display: flex;
  gap: 54px;
  margin: 0;
  font-size: 30px;
  line-height: 46px;
`;

const RgbBox = styled.div`
  width: 328px;
`;

const DataTable = styled.table`
  align-self: flex-start;
  width: 743px;
  margin-top: 9px;
  border-collapse: collapse;
  table-layout: fixed;
  font-size: 22px;

  th, td {
    height: 32px;
    padding: 0;
    font-weight: 400;
    line-height: 24px;
    text-align: left;
  }

  thead th {
    width: 111px;
    height: 36px;
    background: linear-gradient(#2e2e2e 50%, #171717 50%);
    font-size: 20px;
  }

  thead th:last-child {
    width: auto;
  }

  td:first-child {
    width: 20px;
    background: linear-gradient(#2e2e2e, #222);
  }

  thead td:first-child {
    background: #000;
  }

  th:nth-child(2) {
    width: 172px;
    padding-left: 7px;
  }

  tbody tr {
    background: #404040;
  }

  tbody tr:nth-child(even) {
    background: #808080;
  }
`;

const Footer = styled.footer`
  display: flex;
  gap: 2px;
  height: 62px;
  background: linear-gradient(#444, #1c1c1c);
`;

const MeterButton = styled.button`
  display: flex;
  flex-direction: column;
  align-items: center;
  justify-content: space-between;
  width: 45px;
  height: 61px;
  margin-right: 4px;
  padding: 2px 0 5px;
  border-radius: 4px;
  background: linear-gradient(#a0a0a0, #555);
  color: #222;

  i {
    width: 35px;
    height: 30px;
    border: 1px solid #c0c000;
    border-radius: 3px;
    background: #ff0;
  }
`;

const LevelButton = styled.button`
  position: relative;
  display: flex;
  flex-direction: column;
  width: 150px;
  height: 61px;
  padding: 5px;
  border-radius: 4px;
  background: ${(p) => (p.$active ? "linear-gradient(#161616, #343434)" : "linear-gradient(#a0a0a0, #555)")};
  color: ${(p) => (p.$active ? "#fff" : "#222")};
  font-size: 11px;
  font-weight: ${(p) => (p.$active ? 700 : 400)};
  line-height: 22px;
  text-align: center;

  i, & > span {
    width: 100%;
  }

  i {
    flex: none;
    height: 36px;
    border-radius: 3px;
    background: ${(p) => p.$color};
    box-shadow: inset 1px 2px 1px rgba(0, 0, 0, 0.25);
  }
`;

const Tooltip = styled.em`
  position: absolute;
  left: 21px;
  bottom: -1px;
  padding: 0 4px;
  border: 1px solid #bbb;
  background: #fff;
  box-shadow: 3px 3px 2px rgba(0, 0, 0, 0.5);
  color: #444;
  font-size: 11px;
  font-style: normal;
  line-height: 17px;
  white-space: nowrap;
`;

const Controls = styled.div`
  display: flex;
  gap: 1px;
  margin-left: auto;
  margin-right: 2px;
`;

const StopButton = styled.button`
  display: grid;
  place-items: center;
  width: 48px;
  height: 61px;
  padding-top: 18px;
  border-radius: 3px;
  background: linear-gradient(#4a4a4a, #666);

  b {
    width: 30px;
    height: 30px;
    border: 2px solid #222;
    border-radius: 4px;
    background: linear-gradient(#000, #000) center / 13px 13px no-repeat #a0a0a0;
  }
`;

const ControlGrid = styled.div`
  display: grid;
  grid-template-columns: repeat(6, 1fr);
  grid-template-rows: 30px 30px;
  gap: 1px;
  width: 272px;
`;

const ControlButton = styled.button`
  display: grid;
  place-items: center;
  background: linear-gradient(#8a8a8a, #555);
  color: #333;
`;

const ControlOff = styled.div`
  background: #262626;
`;

const NavButton = styled.button`
  display: flex;
  grid-column: span 3;
  align-items: center;
  justify-content: center;
  gap: 17px;
  padding-right: 6px;
  border-radius: 3px;
  background: linear-gradient(#9a9a9a, #5a5a5a);
  color: #333;
  font-size: 22px;
  font-weight: 600;
  line-height: 28px;

  &:last-child {
    padding: 0 0 0 6px;
  }
`;

const Arrows = styled.span`
  width: 20px;
  height: 20px;
  border-radius: 50%;
  background: linear-gradient(#777, #a8a8a8);
  font-weight: 400;
  line-height: 16px;
`;

const Mark = styled.svg`
  position: absolute;
  right: 0;
  bottom: 0;
  width: 386px;
  height: 84px;
  opacity: 0.8;
  pointer-events: none;
`;

const MarkText = styled.text`
  fill: ${(p) => p.$color};
  stroke: #d0d0d0;
  stroke-width: 3px;
  paint-order: stroke;
  font: ${(p) => p.$weight} 34px Lato, sans-serif;
`;
